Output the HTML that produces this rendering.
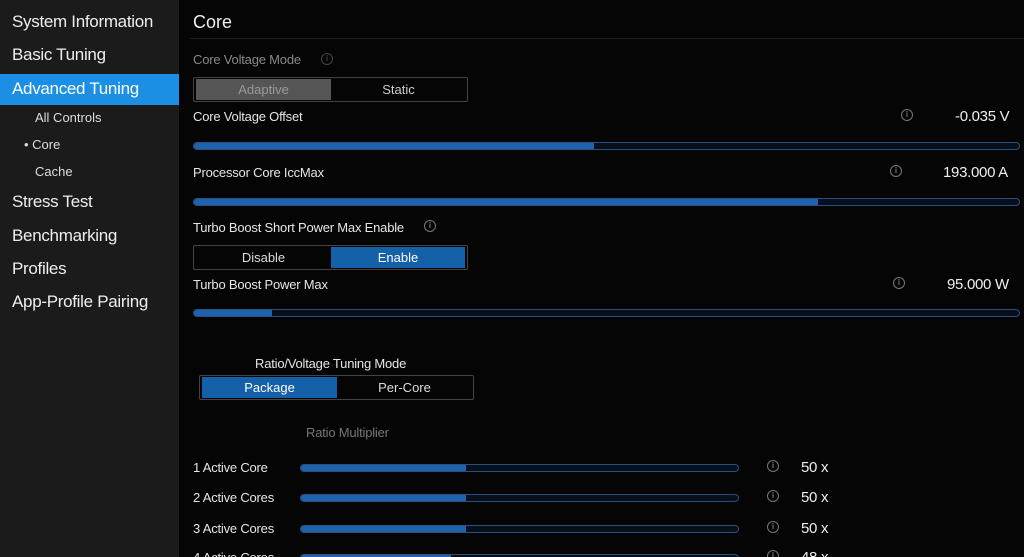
<!DOCTYPE html>
<html style="overflow:hidden;height:557px"><head><style>
html,body{margin:0;width:1024px;height:557px;overflow:hidden}
body{background:#050505;font-family:"Liberation Sans",sans-serif;color:#e8e8e8;position:relative}
.a{position:absolute;white-space:nowrap}
#side{position:absolute;left:0;top:0;width:179px;height:557px;background:#1b1b1b}
.n{font-size:17px;left:12px;color:#eee;letter-spacing:-0.3px}
.s{font-size:13px;color:#ddd}
.lab{font-size:13px;color:#e6e6e6;letter-spacing:-0.2px}
.trk{position:absolute;height:6px;border:1px solid #2b4f78;border-radius:4px;background:#06101c;overflow:hidden}
.trk i{display:block;height:100%;background:#1e63b0}
.info{position:absolute;width:10px;height:10px;border:1.5px solid #777;border-radius:50%;font-size:8px;color:#777;text-align:center;line-height:10px;font-weight:bold}
.seg{position:absolute;border:1px solid #444;border-radius:2px;height:23px}
.seg span{position:absolute;top:1px;height:21px;line-height:21px;text-align:center;font-size:13px}
.val{font-size:15px;color:#eee;letter-spacing:-0.3px}
</style></head><body>
<div id="side"></div>
<div class="a n" style="top:12px">System Information</div>
<div class="a n" style="top:45px">Basic Tuning</div>
<div class="a" style="left:0;top:74px;width:179px;height:31px;background:#1a8fe3"></div>
<div class="a n" style="top:79px;color:#fff">Advanced Tuning</div>
<div class="a s" style="left:35px;top:110px">All Controls</div>
<div class="a s" style="left:24px;top:137px">• Core</div>
<div class="a s" style="left:35px;top:164px">Cache</div>
<div class="a n" style="top:192px">Stress Test</div>
<div class="a n" style="top:226px">Benchmarking</div>
<div class="a n" style="top:259px">Profiles</div>
<div class="a n" style="top:292px">App-Profile Pairing</div>

<div class="a" style="left:193px;top:12px;font-size:18px;color:#eee">Core</div>
<div class="a" style="left:190px;top:38px;width:834px;height:1px;background:#1c1c1c"></div>

<div class="a lab" style="left:193px;top:52px;color:#888">Core Voltage Mode</div>
<div class="info" style="left:321px;top:53px;border-color:#444;color:#444">i</div>
<div class="seg" style="left:193px;top:77px;width:273px">
<span style="left:2px;width:135px;background:#555;color:#999">Adaptive</span>
<span style="left:137px;width:135px;color:#ccc">Static</span></div>

<div class="a lab" style="left:193px;top:109px">Core Voltage Offset</div>
<div class="info" style="left:901px;top:109px">i</div>
<div class="a val" style="left:955px;top:108px">-0.035 V</div>
<div class="trk" style="left:193px;top:142px;width:825px"><i style="width:400px"></i></div>

<div class="a lab" style="left:193px;top:165px">Processor Core IccMax</div>
<div class="info" style="left:890px;top:165px">i</div>
<div class="a val" style="left:943px;top:164px">193.000 A</div>
<div class="trk" style="left:193px;top:198px;width:825px"><i style="width:624px"></i></div>

<div class="a lab" style="left:193px;top:220px">Turbo Boost Short Power Max Enable</div>
<div class="info" style="left:424px;top:220px">i</div>
<div class="seg" style="left:193px;top:245px;width:273px">
<span style="left:2px;width:135px;color:#ddd">Disable</span>
<span style="left:137px;width:134px;background:#1461aa;color:#fff">Enable</span></div>

<div class="a lab" style="left:193px;top:277px">Turbo Boost Power Max</div>
<div class="info" style="left:893px;top:277px">i</div>
<div class="a val" style="left:947px;top:276px">95.000 W</div>
<div class="trk" style="left:193px;top:309px;width:825px"><i style="width:78px"></i></div>

<div class="a lab" style="left:255px;top:356px">Ratio/Voltage Tuning Mode</div>
<div class="seg" style="left:199px;top:375px;width:273px">
<span style="left:2px;width:135px;background:#1461aa;color:#fff">Package</span>
<span style="left:137px;width:135px;color:#ddd">Per-Core</span></div>

<div class="a lab" style="left:306px;top:425px;color:#777">Ratio Multiplier</div>

<div class="a lab" style="left:193px;top:460px">1 Active Core</div>
<div class="trk" style="left:300px;top:464px;width:437px"><i style="width:165px"></i></div>
<div class="info" style="left:767px;top:460px">i</div>
<div class="a val" style="left:801px;top:459px">50 x</div>

<div class="a lab" style="left:193px;top:490px">2 Active Cores</div>
<div class="trk" style="left:300px;top:494px;width:437px"><i style="width:165px"></i></div>
<div class="info" style="left:767px;top:490px">i</div>
<div class="a val" style="left:801px;top:489px">50 x</div>

<div class="a lab" style="left:193px;top:521px">3 Active Cores</div>
<div class="trk" style="left:300px;top:525px;width:437px"><i style="width:165px"></i></div>
<div class="info" style="left:767px;top:521px">i</div>
<div class="a val" style="left:801px;top:520px">50 x</div>

<div class="a lab" style="left:193px;top:550px">4 Active Cores</div>
<div class="trk" style="left:300px;top:554px;width:437px"><i style="width:150px"></i></div>
<div class="info" style="left:767px;top:550px">i</div>
<div class="a val" style="left:801px;top:549px">48 x</div>
</body></html>
